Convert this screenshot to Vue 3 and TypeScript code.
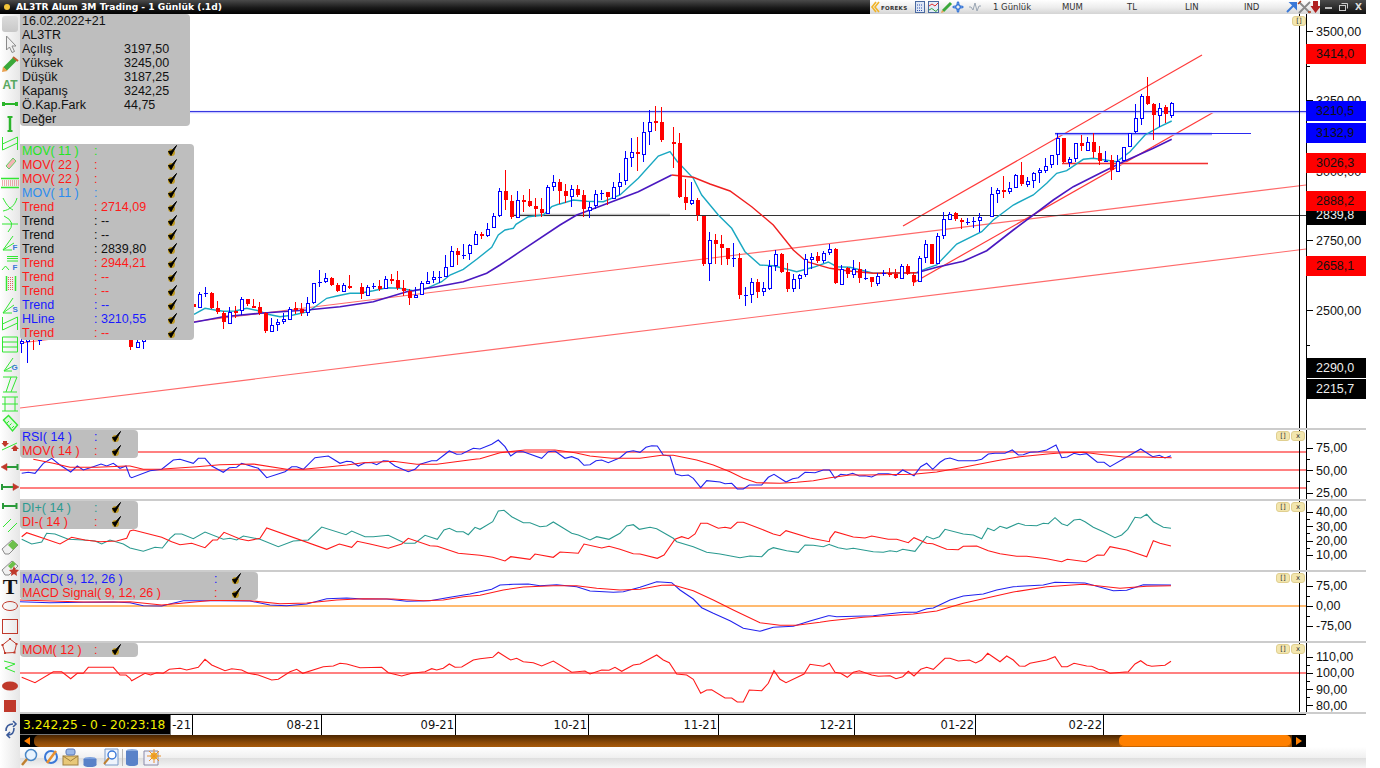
<script setup lang="ts">
type Seg = [number, number, string]
interface Row { name: string; color: string; val?: string }
interface Legend { x?: number; y: number; width: number; cols: string; rows: Row[] }
interface Line { pts: string; color: string; width: number }
interface Label { y: number; text: string; box?: string }

// zoomed coords -> page coords
function parse([ox, oy, s]: Seg): [number, number][] {
  return s.trim().split(/\s+/).map((p) => {
    const [x, y] = p.split(',').map(Number)
    return [ox + x / 3, oy + y / 3] as [number, number]
  })
}
function path(...segs: Seg[]): string {
  const parts = segs.map(parse)
  const out: string[] = []
  parts.forEach((pts, i) => {
    const next = parts[i + 1]?.[0]?.[0] ?? Infinity
    pts.filter((p) => p[0] < next).forEach((p) => out.push(p[0].toFixed(1) + ',' + p[1].toFixed(1)))
  })
  return out.join(' ')
}

const BLUE = '#2222ee'
const RED = '#ff1a1a'
const TEAL = '#2a9a90'

const rsiBlue = path(
  [0, 340, '65,400 85,397 105,400 130,370 155,355 180,375 212,396 232,378 250,390 280,380 303,372 320,378 340,370 360,385 378,378'],
  [130, 430, '0,140 5,143 60,122 95,118 130,90 150,88 190,100 205,85 225,85 245,108 280,127 298,113 320,112 335,100 385,115 410,143 465,125 485,110 500,110 520,118 555,83 595,78 630,100 650,94 665,95 685,108 705,98 725,98 740,104 760,92 775,93 795,108 835,125 855,118 870,103 905,92 920,92 958,63 980,73 995,72 1030,55 1050,57 1080,45'],
  [480, 430, '0,57 35,43 55,30 75,50 92,78 110,65 130,65 185,85 205,65 225,63 255,85 275,80 295,88 312,106 330,104 348,92 365,90 385,98 420,83 440,66 460,62 480,67 498,52 515,47 532,48 550,75 570,78 587,132 605,137 625,135 640,145 662,173 680,152 720,156 735,161 755,160 772,177 790,177 808,165 845,165 865,142 882,133 918,156 938,146 955,143 975,127 1005,128 1030,120 1048,120 1065,145 1080,135'],
  [830, 430, '0,122 15,145 32,133 50,135 68,130 88,138 105,137 125,141 145,131 175,131 198,136 218,120 252,137 272,110 290,100 308,118 330,97 345,87 360,84 385,92 435,92 455,88 475,72 495,70 525,70 547,60 565,75 580,74 600,67 625,65 650,60 678,45 695,83 712,81 732,70 750,74 770,71 802,97 822,97 840,110 932,57 968,80 988,76 1005,84 1023,77'],
)
const rsiRed = path(
  [0, 340, '100,358 160,370 210,382 290,382 380,378'],
  [130, 430, '0,108 40,118 100,117 200,110 270,104 370,102 470,118 520,118 600,110 650,105 700,98 790,94 860,103 920,103 1000,92 1040,87 1080,76'],
  [480, 430, '0,86 60,68 135,60 225,60 285,68 330,78 395,85 480,85 545,76 580,76 650,90 700,105 750,125 790,145 830,158 900,160 950,157 1000,152 1050,142 1080,138'],
  [830, 430, '0,143 60,135 110,135 250,133 320,126 400,112 500,92 570,80 660,71 700,68 760,67 820,74 880,81 940,81 1025,83'],
)
const diTeal = path(
  [0, 340, '65,598 95,612 125,606 140,580 165,582 205,598 250,600 285,603 305,612 330,600 370,612'],
  [130, 430, '0,354 40,364 75,352 97,354 120,325 135,312 155,312 190,326 225,306 280,328 300,325 320,330 340,318 390,328 445,350 490,333 535,330 575,291 648,314 665,303 705,320 730,320 775,316 825,340 855,340 885,316 922,328 942,300 958,295 980,305 1000,305 1015,314 1035,292 1055,297 1080,280'],
  [480, 430, '0,298 38,275 55,243 72,241 95,260 130,278 150,278 180,290 200,288 220,276 275,310 295,315 330,330 350,320 387,328 420,310 440,288 460,284 478,298 510,292 530,296 580,325 590,335 640,350 680,367 720,372 780,383 810,378 845,380 865,360 880,353 920,362 955,367 975,345 1000,346 1030,350 1048,343 1080,355'],
  [830, 430, '0,344 25,353 50,358 70,355 130,365 160,367 180,362 200,365 218,358 255,364 290,319 310,327 328,320 345,298 400,312 430,315 455,326 473,295 492,302 510,289 530,295 565,280 585,286 620,287 640,280 655,281 675,263 695,281 712,287 732,270 750,268 765,275 790,292 820,305 855,323 875,315 893,298 915,262 932,264 950,253 970,275 1000,292 1023,295'],
)
const diRed = path(
  [0, 340, '65,590 80,578 130,595 180,612 215,592 255,600 300,605 350,603 380,595'],
  [130, 430, '0,303 10,300 95,322 125,335 150,344 185,340 225,353 248,330 262,330 282,307 330,327 355,332 390,325 410,294 590,358 628,342 665,352 682,334 720,342 775,355 815,342 835,325 900,347 922,349 985,370 1080,381'],
  [480, 430, '0,376 38,382 75,393 92,380 150,388 165,372 220,382 240,366 295,370 312,342 365,354 387,349 420,358 460,371 480,372 532,385 552,375 585,328 605,320 625,326 645,312 662,280 682,280 715,295 735,292 752,295 772,277 790,277 845,298 880,312 900,317 918,302 990,324 1048,335 1065,305 1080,310'],
  [830, 430, '0,325 15,305 70,321 105,324 125,318 175,328 200,328 235,338 252,323 290,340 308,341 350,358 385,359 400,349 440,348 475,362 510,371 560,379 590,379 650,386 695,395 712,388 768,395 802,375 822,376 840,350 890,360 950,380 970,332 990,340 1023,348'],
)
const macdBlue = path(
  [0, 340, '60,785 150,788 250,787 340,786'],
  [130, 430, '0,518 40,527 95,528 160,512 190,512 270,512 360,513 420,525 470,527 530,522 590,506 650,504 700,507 770,507 830,514 900,512 960,502 1020,492 1080,480'],
  [480, 430, '0,485 35,478 60,465 100,463 145,462 180,467 230,464 290,470 330,483 400,487 430,485 480,472 530,455 575,458 600,480 640,507 665,533 700,550 750,572 790,595 840,604 880,592 940,589 990,573 1045,557 1080,559'],
  [830, 430, '0,557 20,560 130,557 180,551 220,547 260,547 290,536 310,534 360,510 400,498 460,492 500,480 550,470 640,465 675,457 765,459 850,482 890,481 940,464 1023,465'],
)
const macdRed = path(
  [0, 340, '60,780 250,786 340,786'],
  [130, 430, '0,515 95,525 170,518 250,511 360,512 450,521 530,519 620,510 700,506 790,507 880,512 940,510 1000,500 1080,490'],
  [480, 430, '0,496 70,480 130,471 220,467 290,467 350,475 420,480 480,478 545,466 580,465 640,482 700,510 760,540 840,578 900,586 950,586 1020,577 1080,568'],
  [830, 430, '0,572 100,562 250,552 320,543 400,520 460,506 550,486 650,470 760,463 870,475 950,469 1023,467'],
)
const momRed = path(
  [0, 340, '65,1012 105,1028 160,995 185,995 212,1016 232,1000 250,1000 265,982 340,982 360,1005 378,1005'],
  [130, 430, '0,745 5,752 45,730 62,735 80,728 100,730 118,718 150,715 170,720 205,712 225,688 245,705 285,722 305,716 335,720 355,730 385,735 425,750 445,748 480,725 500,718 518,730 580,710 610,708 630,700 650,702 690,713 755,712 775,728 815,738 845,730 885,725 905,716 920,720 940,715 958,702 975,712 995,711 1030,690 1060,683 1080,682'],
  [480, 430, '0,686 38,682 55,667 92,690 110,685 130,695 160,698 185,708 220,693 275,727 315,723 330,732 365,720 387,721 405,712 425,724 460,705 480,702 530,675 550,690 568,698 590,732 620,735 640,748 662,790 680,780 695,779 735,804 755,804 772,816 790,816 808,780 845,782 865,760 882,722 900,748 918,758 972,732 990,703 1030,709 1048,700 1065,727 1080,730'],
  [830, 430, '0,703 15,727 32,730 52,742 70,727 88,722 125,735 145,739 180,737 198,746 218,740 235,724 252,738 272,718 290,712 310,718 345,685 360,685 385,693 418,690 437,699 455,690 473,670 510,695 530,678 550,690 568,708 585,709 600,700 650,690 675,680 695,710 712,710 732,700 770,708 785,709 805,718 820,720 840,730 895,725 915,702 932,692 950,705 965,709 1005,706 1023,694'],
)

const cyan = path(
  [180, 170, '42,433 75,415 105,420 130,424 165,423 200,415 235,422 260,432 300,440 340,435 385,425 440,385 470,378 510,370 540,370 580,362 620,353 660,355 700,362 740,355 785,335 810,315 850,298 890,268 935,232 955,195 975,180 1000,175 1020,157'],
  [500, 165, '48,178 85,155 130,150 155,125 175,118 210,110'],
  [560, 90, '0,342 40,330 80,334 130,335 180,315 235,265 295,198 330,185 350,212 400,265 425,315 475,375 515,415 555,485 600,525 640,527 710,545 760,532 805,516 830,530 880,537'],
  [840, 120, '30,442 100,460 230,458 260,445 290,435 350,372 425,335 460,300 520,255 580,225 620,190 650,160 680,152 730,118'],
  [1050, 70, '130,265 200,275 240,245 285,195 330,170 365,153'],
)
const purpleA = path(
  [180, 170, '42,457 130,440 240,430 380,420 480,410 580,395 680,365 770,350 850,335 920,310 960,285 1020,245'],
  [560, 90, '0,405 50,375 130,345 235,305 335,255'],
)
const redMa = path(
  [560, 90, '335,255 400,262 450,282 510,303 575,350 640,405 700,480 740,515 810,535 880,548'],
  [840, 120, '20,452 100,460 230,458'],
)
const purpleB = path([840, 120, '230,458 290,442 370,424 440,392 520,330 640,240 700,200 780,160 850,125 940,85 995,58'])

const mainLines: Line[] = [
  { pts: '20,408 1306,249', color: '#ff6a6a', width: 1.1 },
  { pts: '20,343 1306,185', color: '#ff6a6a', width: 1.1 },
  { pts: '903,226 1202,55', color: '#ff3a3a', width: 1.2 },
  { pts: '913,283 1214,112', color: '#ff3a3a', width: 1.2 },
  { pts: '1062,163.5 1208,163.5', color: '#ffb0b0', width: 2.5 },
  { pts: '1062,163.5 1208,163.5', color: '#f03030', width: 1 },
  { pts: '1055,134 1212,134', color: '#a0a0f8', width: 2.5 },
  { pts: '1055,133.5 1251,133.5', color: '#2a2af0', width: 1 },
  { pts: '511,215 670,215', color: '#c0c0c0', width: 2.5 },
  { pts: '511,215.5 1306,215.5', color: '#333333', width: 1 },
  { pts: '190,112 1306,112', color: '#c8c8ff', width: 2.5 },
  { pts: '190,111.5 1306,111.5', color: '#3838e0', width: 1 },
]
const maLines: Line[] = [
  { pts: cyan, color: '#1aa8c2', width: 1.4 },
  { pts: purpleA, color: '#4a18c0', width: 1.6 },
  { pts: redMa, color: '#f02020', width: 1.4 },
  { pts: purpleB, color: '#4a18c0', width: 1.6 },
]

// [zoom x, high, low, body top, body bottom, up]
type C = [number, number, number, number, number, 0 | 1]
interface Candle { x: number; hi: number; lo: number; top: number; h: number; up: boolean }
function candles(ox: number, oy: number, rows: C[]): Candle[] {
  return rows.map(([zx, hi, lo, t, b, up]) => ({
    x: Math.round((ox + zx / 3 - 199) / 6) * 6 + 199,
    hi: Math.round(oy + hi / 3),
    lo: Math.round(oy + lo / 3),
    top: Math.round(oy + t / 3),
    h: Math.max(Math.round((b - t) / 3), up && t === b ? 1 : 2),
    up: !!up,
  }))
}
const candleList: Candle[] = [
  ...candles(180, 170, [
    [42,400,412,402,412,0],[57,367,413,373,413,1],[75,352,380,370,370,1],[93,366,418,369,415,0],[111,393,432,415,428,0],[129,424,476,430,458,0],[147,411,458,425,458,1],[165,408,445,422,422,0],
    [185,381,436,388,422,1],[204,388,407,388,404,0],[222,388,415,407,407,0],[240,396,435,412,430,0],[258,425,488,430,485,0],[276,445,485,466,485,1],[294,448,482,457,463,1],[312,430,462,448,455,1],
    [330,410,447,416,445,1],[351,396,432,415,415,0],[369,400,438,416,428,0],[387,380,438,400,428,1],[405,340,402,340,398,1],[423,300,350,337,337,1],[441,309,338,325,335,1],[459,322,347,324,344,0],
    [477,338,366,346,365,0],[495,340,366,346,365,1],[515,315,357,348,348,0],[534,340,387,352,374,0],[552,345,378,350,374,1],[570,340,357,348,348,1],[588,330,362,348,356,0],[606,318,358,328,356,1],
    [624,312,342,327,327,0],[642,303,360,330,355,0],[663,330,378,354,362,0],[681,358,404,363,383,0],[699,352,382,375,382,1],[717,332,375,340,373,1],[735,306,342,332,338,1],[753,304,340,322,328,1],
    [771,304,338,320,320,1],[789,255,320,292,318,1],[807,228,292,244,290,1],[828,234,285,244,257,0],[846,222,268,255,255,1],[864,222,270,226,250,1],[882,184,225,193,223,1],[900,186,207,191,191,0],
    [918,160,202,176,193,1],[936,128,174,139,172,1],[954,55,140,64,136,1],[972,0,120,64,92,0],[993,75,146,94,143,0],[1011,64,143,91,142,1],
  ]),
  ...candles(500, 165, [
    [69,90,140,106,106,0],[87,72,125,108,122,0],[105,100,155,123,131,0],[123,98,155,132,143,0],[141,60,143,66,143,1],[159,30,78,52,64,1],[177,42,118,52,78,0],
  ]),
  ...candles(560, 90, [
    [18,282,340,304,320,0],[36,285,350,298,320,1],[54,285,322,298,315,0],[72,300,382,316,358,0],[90,335,383,350,358,1],[108,300,358,313,346,1],[126,300,330,309,309,1],[144,307,344,307,323,0],
    [165,276,322,290,322,1],[183,250,315,275,287,1],[201,182,285,205,272,1],[219,145,230,187,202,1],[237,141,242,187,194,0],[255,97,215,127,193,1],[273,60,165,97,124,1],[291,48,123,94,98,0],
    [309,52,155,97,152,0],[330,112,235,155,155,0],[348,130,323,160,321,0],[366,268,360,322,341,0],[384,277,345,331,341,1],[402,325,392,331,376,0],[420,377,527,377,521,0],[438,427,572,451,520,1],
    [456,433,521,450,461,0],[474,435,524,462,474,0],[495,474,524,474,506,0],[513,460,530,504,504,1],[531,488,626,504,614,0],[549,590,647,614,614,1],[567,565,638,577,614,1],[585,567,624,576,605,0],
    [603,575,618,595,605,1],[621,510,600,528,594,1],[642,480,542,493,527,1],[660,488,548,492,545,0],[678,520,605,546,597,0],[696,552,605,568,596,1],[714,552,597,556,566,1],[732,493,560,508,553,1],
    [750,488,538,500,507,1],[768,485,520,499,513,0],[786,482,520,490,512,1],[807,461,496,478,488,1],[825,475,581,478,581,0],[843,524,581,536,580,1],
  ]),
  ...candles(840, 120, [
    [21,440,475,445,464,0],[39,420,475,448,462,1],[57,427,488,448,476,0],[75,448,480,473,473,1],[93,470,500,472,488,0],[111,460,497,467,487,1],[132,450,467,459,459,1],[150,445,470,459,459,0],
    [168,448,478,463,476,0],[186,432,478,439,476,1],[204,433,464,438,463,0],[222,455,497,465,485,0],[240,408,484,415,484,1],[258,361,430,373,412,1],[276,372,431,372,431,0],[297,340,430,349,430,1],
    [315,277,356,298,346,1],[333,277,300,281,296,1],[351,277,303,280,299,0],[369,295,326,301,301,0],[387,293,314,305,305,1],[405,292,323,303,303,1],[423,280,336,292,301,1],[444,202,292,223,288,1],
    [462,204,250,211,220,1],[480,168,233,211,211,0],[498,187,222,205,213,1],[516,163,205,166,203,1],[534,127,197,166,194,0],[552,172,202,184,193,1],[570,155,204,159,181,1],[588,143,188,151,157,1],
    [609,115,158,137,148,1],[627,105,145,106,134,1],
  ]),
  ...candles(1050, 70, [
    [15,190,285,205,253,1],[33,205,280,205,278,0],[51,260,290,268,278,1],[69,220,276,220,266,1],[87,195,243,220,230,0],[105,200,240,217,240,1],[123,190,263,217,248,0],[144,228,285,250,275,0],
    [162,243,275,272,272,1],[180,255,329,271,302,0],[198,256,302,272,301,1],[216,230,272,230,270,1],[234,188,227,188,227,1],[252,103,188,145,185,1],[270,72,165,78,143,1],[291,20,105,78,102,0],
    [309,100,209,102,134,0],[327,100,170,113,134,1],[345,105,158,112,134,0],[363,97,143,98,133,1],
  ]),
  // under the legend box, only the bottoms show
  { x: 21, hi: 335, lo: 353, top: 341, h: 2, up: true },
  { x: 27, hi: 335, lo: 363, top: 338, h: 3, up: true },
  { x: 33, hi: 335, lo: 350, top: 338, h: 2, up: false },
  { x: 39, hi: 335, lo: 345, top: 338, h: 2, up: true },
  { x: 130, hi: 335, lo: 350, top: 338, h: 9, up: false },
  { x: 137, hi: 335, lo: 347, top: 342, h: 5, up: true },
  { x: 143, hi: 335, lo: 349, top: 339, h: 2, up: true },
]

const R = '#ff1a1a'
const K = '#111111'
const infoRows: Row[] = [
  { name: '16.02.2022+21', color: K },
  { name: 'AL3TR', color: K },
  { name: 'Açılış', color: K, val: '3197,50' },
  { name: 'Yüksek', color: K, val: '3245,00' },
  { name: 'Düşük', color: K, val: '3187,25' },
  { name: 'Kapanış', color: K, val: '3242,25' },
  { name: 'Ö.Kap.Fark', color: K, val: '44,75' },
  { name: 'Değer', color: K },
]
const mainLegend: Legend = {
  y: 130, width: 174, cols: '72px 72px 12px',
  rows: [
    { name: 'MOV( 11 )', color: '#22e622', val: ':' },
    { name: 'MOV( 22 )', color: R, val: ':' },
    { name: 'MOV( 22 )', color: R, val: ':' },
    { name: 'MOV( 11 )', color: '#2a8cf0', val: ':' },
    { name: 'Trend', color: R, val: ': 2714,09' },
    { name: 'Trend', color: K, val: ': --' },
    { name: 'Trend', color: K, val: ': --' },
    { name: 'Trend', color: K, val: ': 2839,80' },
    { name: 'Trend', color: R, val: ': 2944,21' },
    { name: 'Trend', color: R, val: ': --' },
    { name: 'Trend', color: R, val: ': --' },
    { name: 'Trend', color: '#1a1aff', val: ': --' },
    { name: 'HLine', color: '#1a1aff', val: ': 3210,55' },
    { name: 'Trend', color: R, val: ': --' },
  ],
}

const mainTicks = [[31, 6], [66, 3], [100, 6], [136, 3], [171, 6], [205, 3], [240, 6], [275, 3], [310, 6], [345, 3]]
const mainLabels: Label[] = [
  { y: 31, text: '3500,00' },
  { y: 100, text: '3250,00' },
  { y: 171, text: '3000,00' },
  { y: 240, text: '2750,00' },
  { y: 310, text: '2500,00' },
  { y: 54, text: '3414,0', box: 'red' },
  { y: 111, text: '3210,5', box: 'blue' },
  { y: 133, text: '3132,9', box: 'blue' },
  { y: 215, text: '2839,8', box: 'black' },
  { y: 163, text: '3026,3', box: 'red' },
  { y: 201, text: '2888,2', box: 'red' },
  { y: 266, text: '2658,1', box: 'red' },
  { y: 368, text: '2290,0', box: 'black' },
  { y: 389, text: '2215,7', box: 'black' },
]

interface Pane {
  top: number
  lines: Line[]
  legend: Legend
  ticks: number[][]
  labels: Label[]
}
const salmon = (y: number): Line => ({ pts: `20,${y} 1306,${y}`, color: '#ff8080', width: 2 })
const panes: Pane[] = [
  {
    top: 428,
    lines: [salmon(452), salmon(470), salmon(488), { pts: rsiBlue, color: BLUE, width: 1.1 }, { pts: rsiRed, color: RED, width: 1.1 }],
    legend: { y: 430, width: 118, cols: '72px 16px 12px', rows: [{ name: 'RSI( 14 )', color: '#1a1aff', val: ':' }, { name: 'MOV( 14 )', color: R, val: ':' }] },
    ticks: [[448, 6], [459, 3], [470, 6], [481, 3], [493, 6]],
    labels: [{ y: 447, text: '75,00' }, { y: 470, text: '50,00' }, { y: 492, text: '25,00' }],
  },
  {
    top: 499,
    lines: [{ pts: diTeal, color: TEAL, width: 1.1 }, { pts: diRed, color: RED, width: 1.1 }],
    legend: { y: 501, width: 118, cols: '72px 16px 12px', rows: [{ name: 'DI+( 14 )', color: TEAL, val: ':' }, { name: 'DI-( 14 )', color: R, val: ':' }] },
    ticks: [[512, 6], [519, 3], [526, 6], [533, 3], [541, 6], [548, 3], [555, 6]],
    labels: [{ y: 511, text: '40,00' }, { y: 526, text: '30,00' }, { y: 540, text: '20,00' }, { y: 554, text: '10,00' }],
  },
  {
    top: 570,
    lines: [{ pts: '20,606 1306,606', color: '#ffba70', width: 2 }, { pts: macdBlue, color: BLUE, width: 1.1 }, { pts: macdRed, color: RED, width: 1.1 }],
    legend: { y: 572, width: 238, cols: '192px 16px 12px', rows: [{ name: 'MACD( 9, 12, 26 )', color: '#1a1aff', val: ':' }, { name: 'MACD Signal( 9, 12, 26 )', color: R, val: ':' }] },
    ticks: [[586, 6], [596, 3], [606, 6], [616, 3], [626, 6]],
    labels: [{ y: 585, text: '75,00' }, { y: 605, text: '0,00' }, { y: 625, text: '-75,00' }],
  },
  {
    top: 641,
    lines: [salmon(673), { pts: momRed, color: RED, width: 1.1 }],
    legend: { y: 643, width: 118, cols: '72px 16px 12px', rows: [{ name: 'MOM( 12 )', color: R, val: ':' }] },
    ticks: [[657, 6], [665, 3], [673, 6], [681, 3], [689, 6], [697, 3], [705, 6]],
    labels: [{ y: 656, text: '110,00' }, { y: 672, text: '100,00' }, { y: 689, text: '90,00' }, { y: 705, text: '80,00' }],
  },
]

const dates = [
  { tick: 193, text: '-21' },
  { tick: 322, text: '08-21' },
  { tick: 456, text: '09-21' },
  { tick: 589, text: '10-21' },
  { tick: 719, text: '11-21' },
  { tick: 855, text: '12-21' },
  { tick: 976, text: '01-22' },
  { tick: 1104, text: '02-22' },
]
const chartSlots = [
  { text: '1 Günlük', w: 69 },
  { text: 'MUM', w: 65 },
  { text: 'TL', w: 58 },
  { text: 'LIN', w: 59 },
  { text: 'IND', w: 41 },
]
</script>

<template>
  <div class="app">
    <header class="title">
      <div class="title-left">
        <span class="dot"></span>
        <span class="title-text">AL3TR Alum 3M Trading - 1 Günlük (.1d)</span>
      </div>
      <div class="tools">
        <svg class="logo" width="44" height="14" viewBox="0 0 44 14">
          <path d="M6 2 L2 7 L6 12 M9 2 L5 7 L9 12" fill="none" stroke="#f0b428" stroke-width="1.6" />
          <text x="11" y="9.5" class="foreks">FOREKS</text>
        </svg>
        <svg class="tool-icons" width="68" height="14" viewBox="0 0 68 14">
          <rect x="1.5" y="1.5" width="9" height="11" fill="#dde6f4" stroke="#4a6aa0" />
          <path d="M3 5h6M3 8h6M3 10.5h6" stroke="#3050b0" stroke-dasharray="1 1" />
          <rect x="14.5" y="1.5" width="10" height="11" fill="#e4ecf6" stroke="#4a6aa0" />
          <path d="M15 6 L18 4 L21 6 L24 3" fill="none" stroke="#e03030" />
          <path d="M15 10 Q18 7 20 10 T24 9" fill="none" stroke="#30a040" />
          <path d="M29 11 L37 3" stroke="#3aa83a" stroke-width="3" />
          <path d="M27 13 L28 10 L30 12 Z" fill="#e8a050" />
          <path d="M41 7 L44 4 L47 7 L44 10 Z" fill="none" stroke="#3a78d8" stroke-width="1.6" />
          <path d="M44 1 L46 3.5 H42 Z M44 13 L46 10.5 H42 Z M38 7 L40.500 5 V9 Z M50 7 L47.500 5 V9 Z" fill="#3a78d8" />
          <path d="M55 7 H57 L59 10 L61 3 L63 11 L65 6 H67" fill="none" stroke="#9aa6b4" />
        </svg>
        <div class="slots">
          <span v-for="s in chartSlots" :key="s.text" class="slot" :style="{ width: s.w + 'px' }">{{ s.text }}</span>
        </div>
        <svg class="tool-right" width="36" height="14" viewBox="0 0 36 14">
          <path d="M2 12 L9 5 M6 3 H11 V8 Z" stroke="#3a78d8" stroke-width="2" fill="#3a78d8" />
          <path d="M14 2 L25 13 M25 2 L14 13" stroke="#888" stroke-width="1.8" />
          <path d="M16 1 L13 4 M23 12 L26 12" stroke="#b04020" stroke-width="1.4" />
          <path d="M28 1 H33 V6 H36 L30.500 13 L25.500 6 H28 Z" fill="#b02020" />
        </svg>
      </div>
      <div class="win">
        <svg width="46" height="14" viewBox="0 0 46 14">
          <path d="M5 8 H12" stroke="#ddd" stroke-width="1.6" />
          <rect x="19.500" y="5.500" width="6" height="5" fill="none" stroke="#ccc" />
          <path d="M21.500 3.500 H27.500 V8.500" fill="none" stroke="#ccc" />
        </svg>
        <span class="win-x">X</span>
      </div>
    </header>

    <div class="body">
      <svg class="left-bar" width="20" height="754" viewBox="0 14 20 754">
        <defs>
          <linearGradient id="btn" x1="0" x2="0" y1="0" y2="1">
            <stop offset="0" stop-color="#dcdcdc" />
            <stop offset="1" stop-color="#c8c8c8" />
          </linearGradient>
        </defs>
        <rect x="2" y="16" width="16" height="16" rx="3" fill="url(#btn)" />
        <path d="M6.500 36 V50 L9.500 47 L12 52.500 L14.500 51.500 L12 46 L16 46 Z" fill="#f0f0f0" stroke="#8a8a8a" />
        <path d="M5 69 L15 59" stroke="#3aa83a" stroke-width="5" />
        <path d="M13 57 L18 61" stroke="#c06030" stroke-width="2" />
        <path d="M2 72 L3 66.500 L7.500 71 Z" fill="#e8a050" />
        <text x="10" y="89" class="at">AT</text>

        <g fill="none" stroke="#33e633" stroke-width="1">
          <path d="M3 104 H17" stroke="#2cb52c" stroke-width="2" />
          <path d="M2 102h3v4H2zM15 102h3v4h-3z" fill="#2cb52c" stroke="none" />
          <path d="M10 118 V130" stroke="#2cb52c" stroke-width="2.500" />
          <path d="M7.500 117 H12.500 M7.500 131 H12.500" stroke="#2cb52c" stroke-width="2" />
          <path d="M2.500 144 L17.500 137 V143 L2.500 150 Z M2.500 137 V150 M17.500 137 L17.500 150" />
          <path d="M6 168 L13 160 L16 163 L9 171 Z" fill="#f4b4b4" stroke="#66cc66" transform="translate(0 -2)" />
          <path d="M1 178.500 H19 M1 187.500 H19" stroke-width="1.500" />
          <path d="M2 181 H19 M2 183 H19 M2 185 H19" stroke="#e06060" stroke-dasharray="1 1" />
          <path d="M3 198 C6 204 9 208 13 210 M17 198 C15 206 9 210 3 211" />
          <path d="M4 216 Q17 222 8 232 M2 224 H18" />
          <path d="M3 250 L13 236 M3 250 L14 243 M3 250 H12" />
          <path d="M7 256.500 H18 M7 258.500 H18 M7 261 H18 M2 270 L5.500 266 L9 270" />
          <path d="M6.500 276 V291 M15.500 276 V291" stroke-width="1.500" />
          <path d="M8.500 277 V291 M10.500 277 V291 M12.500 277 V291" stroke="#e06060" stroke-dasharray="1 1" />
          <path d="M3 313 L13 298 M3 313 L14 305 M3 313 H12" />
          <path d="M2.500 324 L17.500 317 V323 L2.500 330 Z M2.500 317 V330 M17.500 317 L17.500 330" />
          <path d="M2.500 337 H17.500 V352 H2.500 Z M2.500 342 H17.500 M2.500 347 H17.500" />
          <path d="M4 371 L13 358 M4 371 L15 365 M4 371 H12" />
          <path d="M3 377 H17 M3 392 H17 M6 392 L11 377 M11 392 L17 377" />
          <path d="M2 397 H18 M2 404 H18 M2 411 H18 M5 397 V411 M15 397 V411" />
          <path d="M3.500 420 L8.500 415.500 L17.500 425 L12.500 431 Z" fill="#dcf8dc" stroke-width="1.400" />
          <path d="M7 423 L9 421 M9.500 425.500 L11.500 423.500 M12 428 L14 426" />
        </g>
        <text x="12.500" y="250" class="blue-mark">F</text>
        <text x="12.500" y="270" class="blue-mark">F</text>
        <text x="12.500" y="312" class="blue-mark">S</text>
        <text x="11.500" y="370" class="blue-mark">G</text>

        <path d="M2 450 L17 443" stroke="#33e633" fill="none" />
        <path d="M3 441 H7 V443 H9 L5 447 L1.500 443 H3 Z" fill="#c0392b" />
        <path d="M13 451 H17 V449 H19 L15 445 L11 449 H13 Z" fill="#c0392b" />
        <path d="M1 467 L7 463.500 V470.500 Z M19 487 L13 483.500 V490.500 Z" fill="#c0392b" stroke="#c0392b" stroke-width="0.500" />
        <g fill="none" stroke="#2a9a3a" stroke-width="2">
          <path d="M7 467 H17 M17.500 464 V470 M2 487 H13 M2 484 V490 M3 506 H16 M3 503 V509 M16.500 503 V509" />
        </g>
        <path d="M3 527 L11 519 M8 532 L17 523" stroke="#33e633" fill="none" />
        <path d="M2 549 L12 540 L18 545 L9 554 H5 Z" fill="#f0f0f0" stroke="#8a8a8a" />
        <path d="M8 545 L13 540 L18 545 L13 550 Z" fill="#6cc04a" />
        <path d="M2 570 L12 561 L18 566 L9 575 H5 Z" fill="#f0f0f0" stroke="#8a8a8a" />
        <path d="M8 566 L13 561 L16 564 L11 569 Z" fill="#6cc04a" />
        <path d="M14 566 L15.500 569.500 L19 570 L16.500 572.500 L17 576 L14 574 L11 576 L11.500 572.500 L9 570 L12.500 569.500 Z" fill="#c0392b" />
        <text x="10" y="594" class="big-t">T</text>

        <g fill="none" stroke="#c0392b" stroke-width="1">
          <ellipse cx="10" cy="606" rx="7.500" ry="4.500" />
          <rect x="2.500" y="619.500" width="15" height="14" />
          <path d="M10 639 L16.500 644 L14.500 652.500 L5 653 L2.500 645 Z" />
        </g>
        <path d="M9 638h2v2H9zM15.500 643h2v2h-2zM13.500 651.500h2v2h-2zM4 652h2v2H4zM1.500 644h2v2h-2z" fill="#c0392b" />
        <path d="M4 661 L15 664 L5 668 L15 672" fill="none" stroke="#33e633" />
        <ellipse cx="10" cy="686" rx="8" ry="4.500" fill="#c0392b" />
        <rect x="4" y="700" width="12" height="12" fill="#c0392b" />
        <path d="M6 731 Q6 724 13 724 M13 721 L16 724 L13 727 M14 728 Q14 735 8 735 M10 732 L7 735 L10 738" fill="none" stroke="#3a5a9a" stroke-width="1.600" />
      </svg>

      <div class="col">
        <section class="pane main">
          <div class="plot">
            <svg class="chart" width="1286" height="414" viewBox="20 14 1286 414">
              <polyline v-for="(l, i) in mainLines" :key="i" :points="l.pts" :stroke="l.color" :stroke-width="l.width" fill="none" />
              <polyline v-for="(l, i) in maLines" :key="'m' + i" :points="l.pts" :stroke="l.color" :stroke-width="l.width" fill="none" />
              <g shape-rendering="crispEdges">
                <g v-for="c in candleList" :key="c.x">
                  <line :x1="c.x + 0.5" :x2="c.x + 0.5" :y1="c.hi" :y2="c.lo" :stroke="c.up ? '#0000ff' : '#ff0000'" />
                  <rect v-if="c.up && c.h > 1" :x="c.x - 0.5" :y="c.top + 0.5" width="3" :height="c.h" fill="#fff" stroke="#0000ff" />
                  <rect v-else :x="c.x - 1" :y="c.top" width="4" :height="c.h" :fill="c.up ? '#0000ff' : '#ff0000'" />
                </g>
              </g>
            </svg>

            <div class="legend info" style="top: 0">
              <div v-for="(r, i) in infoRows" :key="i" class="row info-row">
                <span>{{ r.name }}</span><span>{{ r.val }}</span>
              </div>
            </div>
            <div class="legend" :style="{ top: mainLegend.y + 'px', width: mainLegend.width + 'px' }">
              <div v-for="(r, i) in mainLegend.rows" :key="i" class="row" :style="{ color: r.color, gridTemplateColumns: mainLegend.cols }">
                <span>{{ r.name }}</span><span>{{ r.val }}</span>
                <svg class="check" width="12" height="14" viewBox="0 0 12 14">
                  <circle cx="5.500" cy="8.500" r="3.500" fill="#c09a20" />
                  <path d="M2.500 7.500 L5 11.500 L10.500 1.500 L5.500 7 Z" fill="#000" stroke="#000" stroke-width="1" />
                </svg>
              </div>
            </div>
            <div class="mini solo"><span>[]</span></div>
          </div>
          <div class="axis">
            <i v-for="t in mainTicks" :key="t[0]" class="tick" :style="{ top: t[0] - 14 + 'px', width: t[1] + 'px' }"></i>
            <span v-for="l in mainLabels" :key="l.text" class="lab" :class="l.box" :style="{ top: l.y - 14 + 'px' }">{{ l.text }}</span>
          </div>
        </section>

        <section v-for="p in panes" :key="p.top" class="pane sub">
          <div class="plot">
            <svg class="chart" width="1286" height="69" :viewBox="`20 ${p.top + 2} 1286 69`">
              <polyline v-for="(l, i) in p.lines" :key="i" :points="l.pts" :stroke="l.color" :stroke-width="l.width" fill="none" />
            </svg>
            <div class="legend" :style="{ top: p.legend.y - p.top - 2 + 'px', width: p.legend.width + 'px' }">
              <div v-for="(r, i) in p.legend.rows" :key="i" class="row" :style="{ color: r.color, gridTemplateColumns: p.legend.cols }">
                <span>{{ r.name }}</span><span>{{ r.val }}</span>
                <svg class="check" width="12" height="14" viewBox="0 0 12 14">
                  <circle cx="5.500" cy="8.500" r="3.500" fill="#c09a20" />
                  <path d="M2.500 7.500 L5 11.500 L10.500 1.500 L5.500 7 Z" fill="#000" stroke="#000" stroke-width="1" />
                </svg>
              </div>
            </div>
            <div class="mini"><span>[]</span><span>x</span></div>
          </div>
          <div class="axis">
            <i v-for="t in p.ticks" :key="t[0]" class="tick" :style="{ top: t[0] - p.top - 2 + 'px', width: t[1] + 'px' }"></i>
            <span v-for="l in p.labels" :key="l.text" class="lab" :style="{ top: l.y - p.top - 2 + 'px' }">{{ l.text }}</span>
          </div>
        </section>

        <div class="dates">
          <div class="date-line">
            <span v-for="d in dates" :key="d.tick" class="date" :style="{ left: d.tick - 80 + 'px' }">{{ d.text }}</span>
            <div class="clock">3.242,25 - 0 - 20:23:18</div>
          </div>
        </div>

        <div class="scroll">
          <div class="arrow"><i class="tri-l"></i></div>
          <div class="track"><div class="thumb"></div></div>
          <div class="arrow"><i class="tri-r"></i></div>
        </div>

        <footer class="bottom">
          <svg width="150" height="21" viewBox="0 0 150 21">
            <circle cx="11" cy="8" r="5.500" fill="#e8f4ff" stroke="#4a88c8" stroke-width="1.500" />
            <path d="M7 12 L2 18" stroke="#c08030" stroke-width="2.500" />
            <circle cx="31" cy="10" r="6" fill="#e8f0f8" stroke="#3a78d8" stroke-width="2" />
            <path d="M27 16 L36 4" stroke="#e89030" stroke-width="2.500" />
            <rect x="43" y="9" width="15" height="9" fill="#e8c878" stroke="#a08040" />
            <path d="M43 9 L50.500 14 L58 9" fill="none" stroke="#a08040" />
            <rect x="46" y="2" width="9" height="6" rx="2" fill="#9ab8e8" stroke="#5a78b8" />
            <ellipse cx="70" cy="12" rx="6.500" ry="2" fill="#7a9fdc" />
            <rect x="63.500" y="12" width="13" height="6" fill="#5a82c8" />
            <ellipse cx="70" cy="18" rx="6.500" ry="2" fill="#5a82c8" />
            <path d="M85 2 H98 V18 H85 Z" fill="#eef4fc" stroke="#7a9ac8" />
            <circle cx="92" cy="8" r="4" fill="#fff" stroke="#3a78d8" stroke-width="1.400" />
            <path d="M89 11 L84 17" stroke="#c08030" stroke-width="2" />
            <path d="M102.500 2 V19" stroke="#b8b8b8" />
            <ellipse cx="112" cy="4" rx="6" ry="2" fill="#8aaade" />
            <rect x="106" y="4" width="12" height="13" fill="#5a82c8" />
            <ellipse cx="112" cy="17" rx="6" ry="2" fill="#5a82c8" />
            <path d="M124 4 H138 V18 H124 Z" fill="#f0f0f8" stroke="#8a8aa8" />
            <circle cx="134" cy="9" r="3.500" fill="#f5b820" />
            <path d="M134 2 V16 M127 9 H141 M129 4 L139 14 M139 4 L129 14" stroke="#e89030" />
          </svg>
        </footer>
      </div>
    </div>
  </div>
</template>

<style>
html, body { margin: 0; background: #fff; }
</style>

<style scoped>
.app { width: 1366px; height: 768px; display: flex; flex-direction: column; font-family: "Liberation Sans", Arial, sans-serif; overflow: hidden; background: #fff; }

.title { height: 14px; display: flex; flex: none; }
.title-left { width: 870px; display: flex; align-items: center; background: linear-gradient(#4a4a4a, #1a1a1a 55%, #000); color: #fff; }
.dot { width: 6px; height: 6px; border-radius: 50%; margin-left: 4px; background: #f2c53a; }
.title-text { margin-left: 6px; font: bold 9.15px "DejaVu Sans", sans-serif; white-space: nowrap; letter-spacing: 0; }
.tools { width: 450px; display: flex; align-items: center; background: linear-gradient(#fff, #ececec 55%, #d4d4d4); }
.logo { flex: none; margin-left: 0; }
.foreks { font: bold 5.5px "DejaVu Sans", sans-serif; fill: #333; letter-spacing: 0.3px; }
.tool-icons { flex: none; margin-right: 11px; }
.slots { display: flex; flex: 1; font: 8.5px "DejaVu Sans", sans-serif; color: #333; }
.slot { display: block; white-space: nowrap; }
.tool-right { flex: none; }
.win { width: 46px; position: relative; background: linear-gradient(#4a4a4a, #111); }
.win svg { display: block; }
.win-x { position: absolute; top: 0; right: 4px; font: bold 9px/14px "DejaVu Sans", sans-serif; color: #ddd; }

.body { display: flex; flex: 1; min-height: 0; }
.left-bar { flex: none; display: block; background: linear-gradient(90deg, #fff, #e6e6e6); }
.at { font: bold 12px "Liberation Sans", sans-serif; fill: #58a860; text-anchor: middle; }
.blue-mark { font: bold 8px "Liberation Sans", sans-serif; fill: #3a78d8; }
.big-t { font: bold 22px "Liberation Serif", serif; fill: #111; text-anchor: middle; }

.col { width: 1346px; display: flex; flex-direction: column; }
.pane { display: flex; flex: none; }
.main { height: 414px; }
.sub { height: 71px; border-top: 2px solid #ccc; box-sizing: border-box; }
.plot { width: 1286px; position: relative; flex: none; }
.plot::after { content: ""; position: absolute; left: 1279px; top: 0; bottom: 0; width: 1px; background: #000; }
.chart { display: block; }

.axis { width: 60px; flex: none; position: relative; border-left: 1px solid #000; box-sizing: border-box; font-size: 12.5px; color: #111; }
.tick { position: absolute; left: 0; height: 1px; background: #000; }
.lab { position: absolute; left: 9px; height: 14px; line-height: 14px; margin-top: -6px; white-space: nowrap; }
.lab.red, .lab.blue, .lab.black { left: -1px; width: 60px; height: 20px; line-height: 20px; margin-top: -10px; padding-left: 10px; box-sizing: border-box; }
.lab.red { background: #ff0000; color: #111; }
.lab.blue { background: #0000ff; color: #111; }
.lab.black { background: #000; color: #eee; }

.legend { position: absolute; left: 0; background: #bebebe; border-radius: 0 4px 4px 4px; font-size: 12.5px; padding-left: 2px; box-sizing: border-box; }
.info { width: 170px; }
.row { display: grid; height: 14px; line-height: 14px; white-space: nowrap; }
.info-row { grid-template-columns: 102px 60px; color: #111; }
.check { display: block; }

.mini { position: absolute; top: 1px; left: 1256px; display: flex; gap: 1px; z-index: 1; }
.mini.solo { top: 2px; left: 1272px; }
.mini span { width: 14px; height: 10px; border: 1px solid #e0cf90; border-radius: 3px; background: #f3e6ae; box-sizing: border-box; font: 7px/8px "DejaVu Sans", sans-serif; text-align: center; color: #333; }

.dates { height: 23px; flex: none; border-top: 2px solid #ccc; box-sizing: border-box; }
.date-line { width: 1286px; height: 21px; position: relative; border-top: 1px solid #000; box-sizing: border-box; font: 11.5px/20px "DejaVu Sans", sans-serif; color: #111; }
.date { position: absolute; top: 0; width: 60px; height: 20px; padding-right: 1px; text-align: right; border-right: 1px solid #000; box-sizing: border-box; }
.clock { position: absolute; left: 0; top: 0; width: 151px; height: 20px; background: #000; border: 1px solid #777; border-top: 0; border-left: 0; box-sizing: border-box; padding-left: 3px; color: #f2f000; font-size: 12.3px; white-space: nowrap; }

.scroll { height: 12px; width: 1286px; display: flex; flex: none; background: #000; }
.arrow { width: 14px; flex: none; display: flex; align-items: center; justify-content: center; }
.tri-l, .tri-r { display: block; width: 0; height: 0; border-top: 4px solid transparent; border-bottom: 4px solid transparent; }
.tri-l { border-right: 6px solid #ff8000; }
.tri-r { border-left: 6px solid #ff8000; }
.track { flex: 1; position: relative; border-radius: 5px 0 0 5px; background: linear-gradient(#4a2500, #8a4a08 60%, #a85a0a); }
.thumb { position: absolute; left: 1085px; width: 172px; top: 0; bottom: 0; border-radius: 5px; background: #ff8000; box-shadow: inset 0 -1px 0 #c86400; }

.bottom { height: 21px; flex: none; background: linear-gradient(#fff, #f0f0f0 50%, #dedede 52%, #f6f6f6); }
.bottom svg { display: block; }
</style>
